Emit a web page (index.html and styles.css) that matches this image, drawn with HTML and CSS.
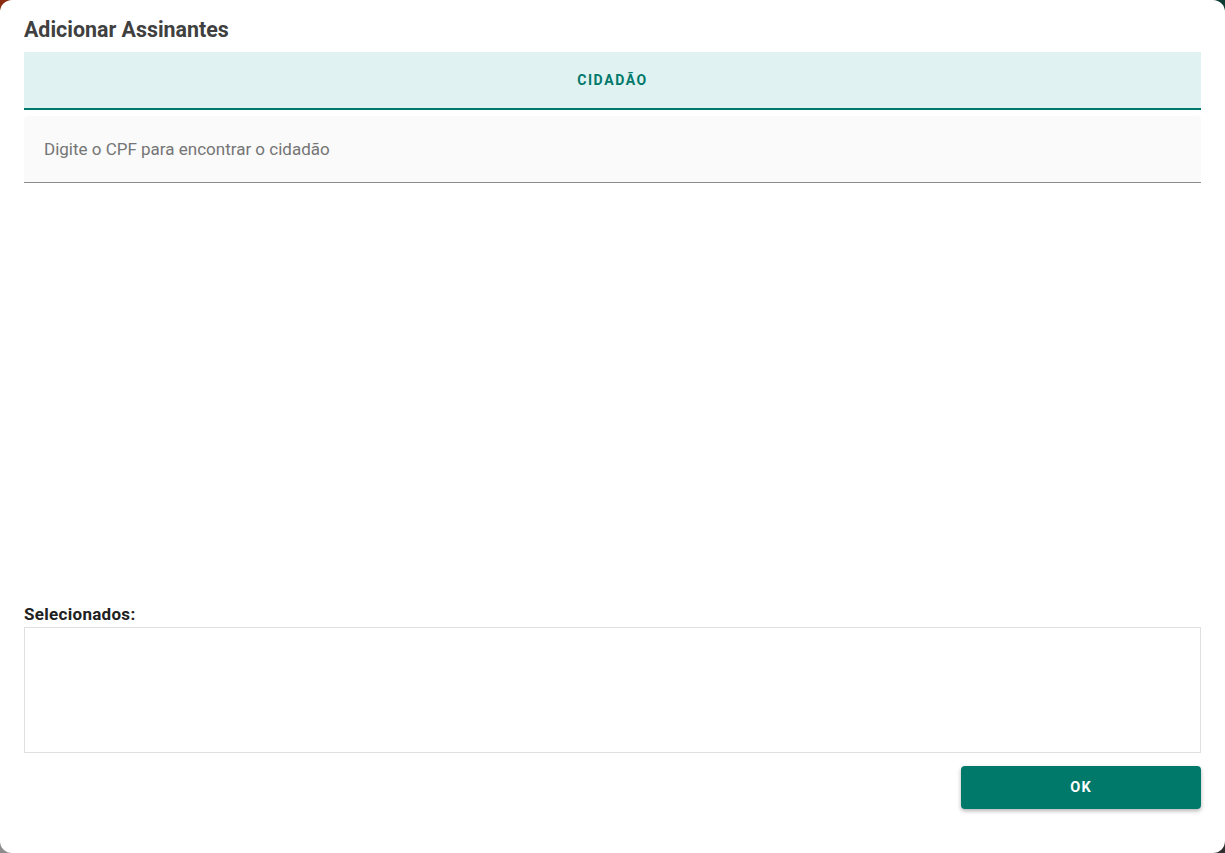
FILE: index.html
```html
<!DOCTYPE html>
<html lang="pt-BR">
<head>
<meta charset="utf-8">
<title>Adicionar Assinantes</title>
<link rel="stylesheet" href="styles.css">
</head>
<body>
<div class="dialog">
  <h1 class="title">Adicionar Assinantes</h1>
  <div class="tabs">
    <div class="tab active">CIDADÃO</div>
  </div>
  <div class="field">
    <input class="field-input" type="text" placeholder="Digite o CPF para encontrar o cidadão">
  </div>
  <div class="spacer"></div>
  <div class="label">Selecionados:</div>
  <div class="selected-box"></div>
  <div class="actions">
    <button class="btn-ok" type="button">OK</button>
  </div>
</div>
</body>
</html>
```

FILE: styles.css
```css
* { box-sizing: border-box; }
html, body { margin: 0; height: 100%; }
body {
  font-family: Roboto, "Noto Sans", Arial, sans-serif;
  background:
    linear-gradient(to right, #8a2b10 50%, #0b3b33 50%) top / 100% 50% no-repeat,
    linear-gradient(to right, #8c8c8c 50%, #2f2f2f 50%) bottom / 100% 50% no-repeat;
  overflow: hidden;
}
.dialog {
  height: 100vh;
  background: #fff;
  border-radius: 12px;
  padding: 16px 24px 44px;
  display: flex;
  flex-direction: column;
}
.title {
  margin: 0 0 8px;
  font-size: 21.4px;
  line-height: 28px;
  font-weight: 700;
  color: #404040;
}
.tabs {
  display: flex;
  background: #e0f2f1;
  border-bottom: 2px solid #00796b;
  height: 58px;
}
.tab {
  flex: 1;
  display: flex;
  align-items: center;
  justify-content: center;
  font-size: 14px;
  font-weight: 700;
  letter-spacing: 1.6px;
  color: #00796b;
}
.field {
  margin-top: 6px;
  background: #fafafa;
  border-radius: 4px 4px 0 0;
  border-bottom: 1px solid #8c8c8c;
  height: 67px;
  display: flex;
  align-items: center;
}
.field-input {
  width: 100%;
  height: 100%;
  border: 0;
  outline: none;
  background: transparent;
  padding: 0 20px;
  font-family: inherit;
  font-size: 17px;
  color: #212121;
}
.field-input::placeholder { color: #757575; opacity: 1; }
.spacer { flex: 1; }
.label {
  font-size: 17px;
  line-height: 24px;
  font-weight: 700;
  letter-spacing: 0.3px;
  color: #212121;
  margin-bottom: 1px;
}
.selected-box {
  height: 126px;
  border: 1px solid #e0e0e0;
}
.actions {
  display: flex;
  justify-content: flex-end;
  margin-top: 13px;
}
.btn-ok {
  width: 240px;
  height: 43px;
  border: 0;
  border-radius: 4px;
  background: #00796b;
  color: #fff;
  font-family: inherit;
  font-size: 14.5px;
  font-weight: 700;
  letter-spacing: 1.25px;
  box-shadow: 0 2px 4px rgba(0,0,0,0.3);
  cursor: pointer;
}
```
